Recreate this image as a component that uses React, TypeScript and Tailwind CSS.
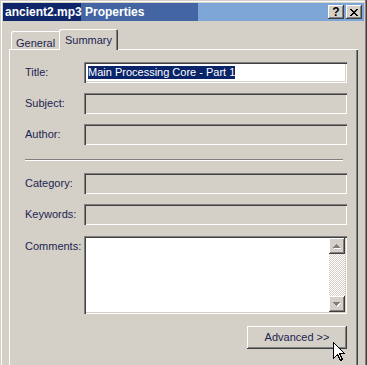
const raised =
  'shadow-[inset_-1px_-1px_0_#404040,inset_1px_1px_0_#ffffff,inset_-2px_-2px_0_#808080]';
const sunken =
  'shadow-[inset_1px_1px_0_#808080,inset_2px_2px_0_#404040,inset_-1px_-1px_0_#ffffff,inset_-2px_-2px_0_#d4d0c8]';
const tabEdge =
  'shadow-[inset_1px_1px_0_#ffffff,inset_-1px_0_0_#404040,inset_-2px_0_0_#808080]';

function Field({ label, value }: { label: string; value?: string }) {
  return (
    <div className="flex items-center h-[21px]">
      <div className="w-[59px]">{label}</div>
      <div className={`w-[263px] h-[21px] pl-[4px] flex items-center ${value ? 'bg-white' : 'bg-[#d4d0c8]'} ${sunken}`}>
        {value && <span className="bg-[#0a246a] text-white leading-[13px] h-[13px]">{value}</span>}
      </div>
    </div>
  );
}

function CloseGlyph() {
  const px = [
    [0, 0], [1, 0], [6, 0], [7, 0],
    [1, 1], [2, 1], [5, 1], [6, 1],
    [2, 2], [3, 2], [4, 2], [5, 2],
    [3, 3], [4, 3],
    [2, 4], [3, 4], [4, 4], [5, 4],
    [1, 5], [2, 5], [5, 5], [6, 5],
    [0, 6], [1, 6], [6, 6], [7, 6],
  ];
  return (
    <svg width="8" height="7" viewBox="0 0 8 7" shapeRendering="crispEdges">
      {px.map(([x, y]) => (
        <rect key={`${x}-${y}`} x={x} y={y} width="1" height="1" fill="#000" />
      ))}
    </svg>
  );
}

function Arrow({ up }: { up: boolean }) {
  const rows = up ? [[3, 1], [2, 3], [1, 5], [0, 7]] : [[0, 7], [1, 5], [2, 3], [3, 1]];
  return (
    <svg width="8" height="5" viewBox="0 0 8 5" shapeRendering="crispEdges">
      {rows.map(([x, w], i) => (
        <rect key={`w${i}`} x={x + 1} y={i + 1} width={w} height="1" fill="#ffffff" />
      ))}
      {rows.map(([x, w], i) => (
        <rect key={`g${i}`} x={x} y={i} width={w} height="1" fill="#808080" />
      ))}
    </svg>
  );
}

export default function App() {
  return (
    <div className="relative w-[367px] h-[365px] overflow-hidden bg-[#d4d0c8] font-['Liberation_Sans',Arial,sans-serif] text-[11px] text-[#1c2450]">
      <div className="h-[400px] border-r border-[#404040]">
        <div className="h-full pt-px pl-px border-r border-[#808080]">
          <div className="h-full flex flex-col border-t border-l border-white pt-px pl-px pr-px">
            {/* title bar */}
            <div className="h-[18px] flex items-center bg-[linear-gradient(to_right,#10266b_0px,#10266b_78px,#4465a4_78px,#4465a4_195px,#7da5d5_195px)]">
              <div className="flex-1 pl-[2px] font-bold text-white text-[12px] leading-[18px]">
                ancient2.mp3 Properties
              </div>
              <div className="flex gap-[2px] mr-[2px]">
                <div className={`w-[16px] h-[14px] bg-[#d4d0c8] flex items-center justify-center font-bold text-[12px] leading-none text-black ${raised}`}>
                  ?
                </div>
                <div className={`w-[16px] h-[14px] bg-[#d4d0c8] flex items-center justify-center ${raised}`}>
                  <CloseGlyph />
                </div>
              </div>
            </div>

            {/* tabs */}
            <div className="pt-[8px] px-[6px]">
              <div className="flex items-end h-[20px] pl-[2px]">
                <div className={`w-[50px] h-[18px] pl-[5px] pt-[4px] rounded-tl-[2px] ${tabEdge}`}>General</div>
                <div className={`relative z-10 -ml-[2px] -mb-px w-[59px] h-[21px] pt-[3px] text-center bg-[#d4d0c8] rounded-tl-[2px] rounded-tr-[2px] ${tabEdge}`}>
                  Summary
                </div>
              </div>

              {/* panel */}
              <div className={`h-[340px] pl-[16px] pt-[13px] ${tabEdge}`}>
                <div className="flex flex-col gap-[10px]">
                  <Field label="Title:" value="Main Processing Core - Part 1" />
                  <Field label="Subject:" />
                  <Field label="Author:" />
                </div>
                <div className="mt-[14px] w-[318px] h-[2px] border-t border-[#808080] border-b border-b-white" />
                <div className="mt-[12px] flex flex-col gap-[10px]">
                  <Field label="Category:" />
                  <Field label="Keywords:" />
                </div>
                <div className="mt-[11px] flex">
                  <div className="w-[59px] pt-[2px]">Comments:</div>
                  <div className={`w-[263px] h-[78px] bg-white p-[2px] flex justify-end ${sunken}`}>
                    <div className="w-[16px] h-full flex flex-col">
                      <div className={`h-[16px] bg-[#d4d0c8] flex items-center justify-center ${raised}`}>
                        <Arrow up />
                      </div>
                      <div className="flex-1 bg-[repeating-conic-gradient(#ffffff_0%_25%,#d4d0c8_0%_50%)] bg-size-[2px_2px]" />
                      <div className={`h-[16px] bg-[#d4d0c8] flex items-center justify-center ${raised}`}>
                        <Arrow up={false} />
                      </div>
                    </div>
                  </div>
                </div>
                <div className="mt-[12px] w-[322px] flex justify-end">
                  <div className={`w-[100px] h-[23px] flex items-center justify-center ${raised}`}>
                    Advanced &gt;&gt;
                  </div>
                </div>
              </div>
            </div>
          </div>
        </div>
      </div>

      {/* mouse pointer */}
      <svg
        className="absolute left-[333px] top-[342px]"
        width="13"
        height="20"
        viewBox="0 0 13 20"
        shapeRendering="crispEdges"
      >
        <path
          d="M0.5 0.5 L0.5 16.5 L4.5 12.5 L7.5 18.5 L9.5 17.5 L6.5 11.5 L11.5 11.5 Z"
          fill="#ffffff"
          stroke="#000000"
          strokeWidth="1"
        />
      </svg>
    </div>
  );
}
